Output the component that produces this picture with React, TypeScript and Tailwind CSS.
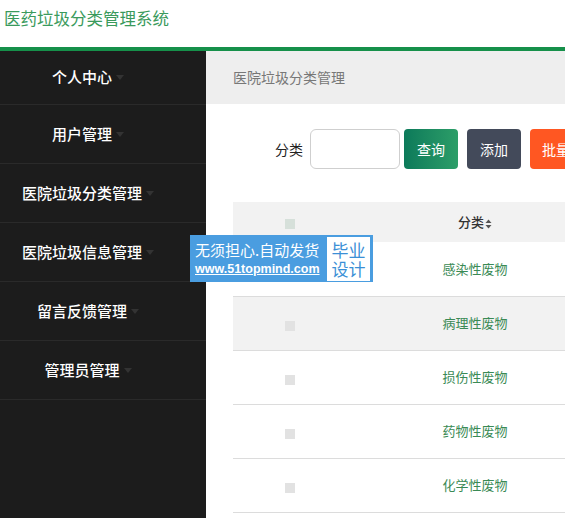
import React from 'react';

const menus = ['个人中心', '用户管理', '医院垃圾分类管理', '医院垃圾信息管理', '留言反馈管理', '管理员管理'];
const rows = ['感染性废物', '病理性废物', '损伤性废物', '药物性废物', '化学性废物'];

const Caret: React.FC = () => (
  <span className="ml-1 inline-block h-0 w-0 border-x-[4px] border-t-[5px] border-x-transparent border-t-[#333] align-middle" />
);

const SortIcon: React.FC = () => (
  <svg width="7" height="10" viewBox="0 0 7 10" className="ml-[1px] inline-block align-middle">
    <path d="M3.5 0.5 L6.5 4 L0.5 4 Z" fill="#555" />
    <path d="M3.5 9.5 L6.5 6 L0.5 6 Z" fill="#555" />
  </svg>
);

const App: React.FC = () => {
  return (
    <div
      className="relative h-[518px] w-[565px] overflow-hidden bg-white"
      style={{ fontFamily: '"Noto Sans CJK SC", "Noto Sans", sans-serif' }}
    >
      <header className="h-[47px] pl-[4px] pt-[9px]">
        <h1 className="text-[16.5px] leading-[18px] text-[#3a9a5c]">医药垃圾分类管理系统</h1>
      </header>
      <div className="h-[4px] bg-[#16904a]" />

      <div className="flex h-[467px]">
        <aside className="w-[206px] shrink-0 bg-[#1c1c1c]">
          {menus.map((m, i) => (
            <div
              key={m}
              className={`flex items-center justify-center border-b border-[#2a2a2a] pr-[30px] text-[15px] font-medium text-white ${
                i === 0 ? 'h-[54px]' : 'h-[59px]'
              }`}
            >
              <span>{m}</span>
              <Caret />
            </div>
          ))}
        </aside>

        <main className="flex-1 overflow-hidden">
          <div className="flex h-[53px] items-center bg-[#eeeeee] pl-[27px] text-[14px] text-[#777]">
            医院垃圾分类管理
          </div>

          <div className="flex items-center pl-[69px] pt-[25px]">
            <label className="mr-[7px] shrink-0 whitespace-nowrap text-[14px] text-[#222]">分类</label>
            <input className="h-[40px] w-[90px] shrink-0 rounded-[6px] border border-[#cfcfcf] bg-white outline-none" />
            <button className="ml-[4px] h-[40px] w-[54px] shrink-0 rounded-[4px] bg-gradient-to-r from-[#0b7a5a] to-[#2c9e68] text-[14px] text-white">
              查询
            </button>
            <button className="ml-[9px] h-[40px] w-[54px] shrink-0 rounded-[4px] bg-[#434a5a] text-[14px] text-white">
              添加
            </button>
            <button className="ml-[9px] h-[40px] w-[80px] shrink-0 whitespace-nowrap rounded-[4px] bg-[#ff5722] pl-[12px] text-left text-[14px] text-white">
              批量删除
            </button>
          </div>

          <table className="ml-[27px] mt-[33px] w-[400px] table-fixed border-collapse">
            <thead>
              <tr className="h-[40px] bg-[#f2f2f2]">
                <th className="w-[114px]">
                  <span className="inline-block h-[10px] w-[10px] bg-[#d6e0da]" />
                </th>
                <th className="w-[256px] text-[13px] font-medium text-[#333]">
                  分类
                  <SortIcon />
                </th>
                <th />
              </tr>
            </thead>
            <tbody>
              {rows.map((r, i) => (
                <tr key={r} className={`h-[54px] border-b border-[#dcdcdc] ${i === 1 ? 'bg-[#f2f2f2]' : 'bg-white'}`}>
                  <td className="text-center">
                    <span className="inline-block h-[10px] w-[10px] bg-[#e2e2e2] align-middle" />
                  </td>
                  <td className="text-center text-[13px] text-[#3a8a55]">{r}</td>
                  <td />
                </tr>
              ))}
            </tbody>
          </table>
        </main>
      </div>

      <div className="absolute left-[190px] top-[235px] flex h-[47px] w-[183px] items-center bg-[#4a9de0] pl-[5px] pr-[3px]">
        <div className="flex flex-col whitespace-nowrap leading-none text-white">
          <span className="text-[15px]">无须担心.自动发货</span>
          <span
            className="mt-[6px] text-[12.5px] font-bold underline"
            style={{ fontFamily: '"Liberation Sans", Arial, sans-serif' }}
          >
            www.51topmind.com
          </span>
        </div>
        <div className="ml-auto flex h-[44px] w-[43px] shrink-0 flex-col items-center justify-center bg-white text-[17px] leading-[19px] text-[#3b8fd6]">
          <span>毕业</span>
          <span>设计</span>
        </div>
      </div>
    </div>
  );
};

export default App;
